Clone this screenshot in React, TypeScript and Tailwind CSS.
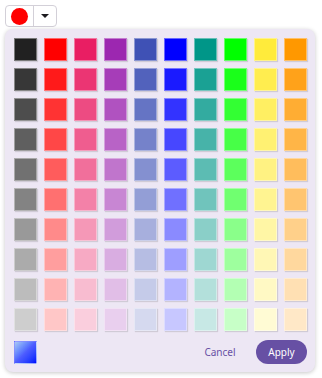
import React from "react";

const baseColors = [
  [33, 33, 33],
  [255, 0, 0],
  [233, 30, 99],
  [156, 39, 176],
  [63, 81, 181],
  [0, 0, 255],
  [0, 150, 136],
  [0, 255, 0],
  [255, 235, 59],
  [255, 152, 0],
];

const alphas = [1, 0.9, 0.8, 0.72, 0.64, 0.56, 0.46, 0.38, 0.3, 0.22];

// mix the base colour with white for each row
const tint = (c: number[], a: number) => {
  const [r, g, b] = c.map((v) => Math.round(255 - a * (255 - v)));
  return `rgb(${r}, ${g}, ${b})`;
};

export default function App() {
  return (
    <div className="min-h-[378px] w-[322px] bg-white font-['Noto_Sans',sans-serif]">
      {/* split button */}
      <div className="ml-[5px] pt-[5px]">
        <div className="flex h-[22px] w-[52px] overflow-hidden rounded-[4px] border border-[#d3d0d8] bg-white">
          <div className="flex w-[28px] items-center justify-center border-r border-[#d3d0d8]">
            <div className="h-[17px] w-[17px] rounded-full bg-[#ff0000]" />
          </div>
          <div className="flex flex-1 items-center justify-center">
            <div className="h-0 w-0 border-x-[4px] border-t-[4px] border-x-transparent border-t-[#1c1b1f]" />
          </div>
        </div>
      </div>

      {/* palette popup */}
      <div className="ml-[5px] mt-[2px] w-[310px] rounded-[8px] bg-[#ede7f4] pb-[8px] pl-[9px] pr-[8px] pt-[9px] shadow-[0_1px_4px_rgba(0,0,0,0.22)]">
        <div className="grid grid-cols-[repeat(10,23px)] gap-[7px]">
          {alphas.map((a, row) =>
            baseColors.map((c, col) => (
              <div
                key={`${row}-${col}`}
                className="h-[23px] w-[23px] border border-white/40 shadow-[1px_1px_1px_rgba(0,0,0,0.12)]"
                style={{ backgroundColor: tint(c, a) }}
              />
            ))
          )}
        </div>

        <div className="mt-[9px] flex items-center">
          <div className="h-[23px] w-[23px] border border-white/40 bg-gradient-to-br from-[#a9c8f3] via-[#4d5cff] to-[#0000ff]" />
          <div className="flex-1" />
          <button className="h-[24px] w-[50px] text-[10px] text-[#6750a4]">Cancel</button>
          <button className="ml-[11px] h-[24px] w-[51px] rounded-full bg-[#6750a4] text-[10px] text-white">
            Apply
          </button>
        </div>
      </div>
    </div>
  );
}
